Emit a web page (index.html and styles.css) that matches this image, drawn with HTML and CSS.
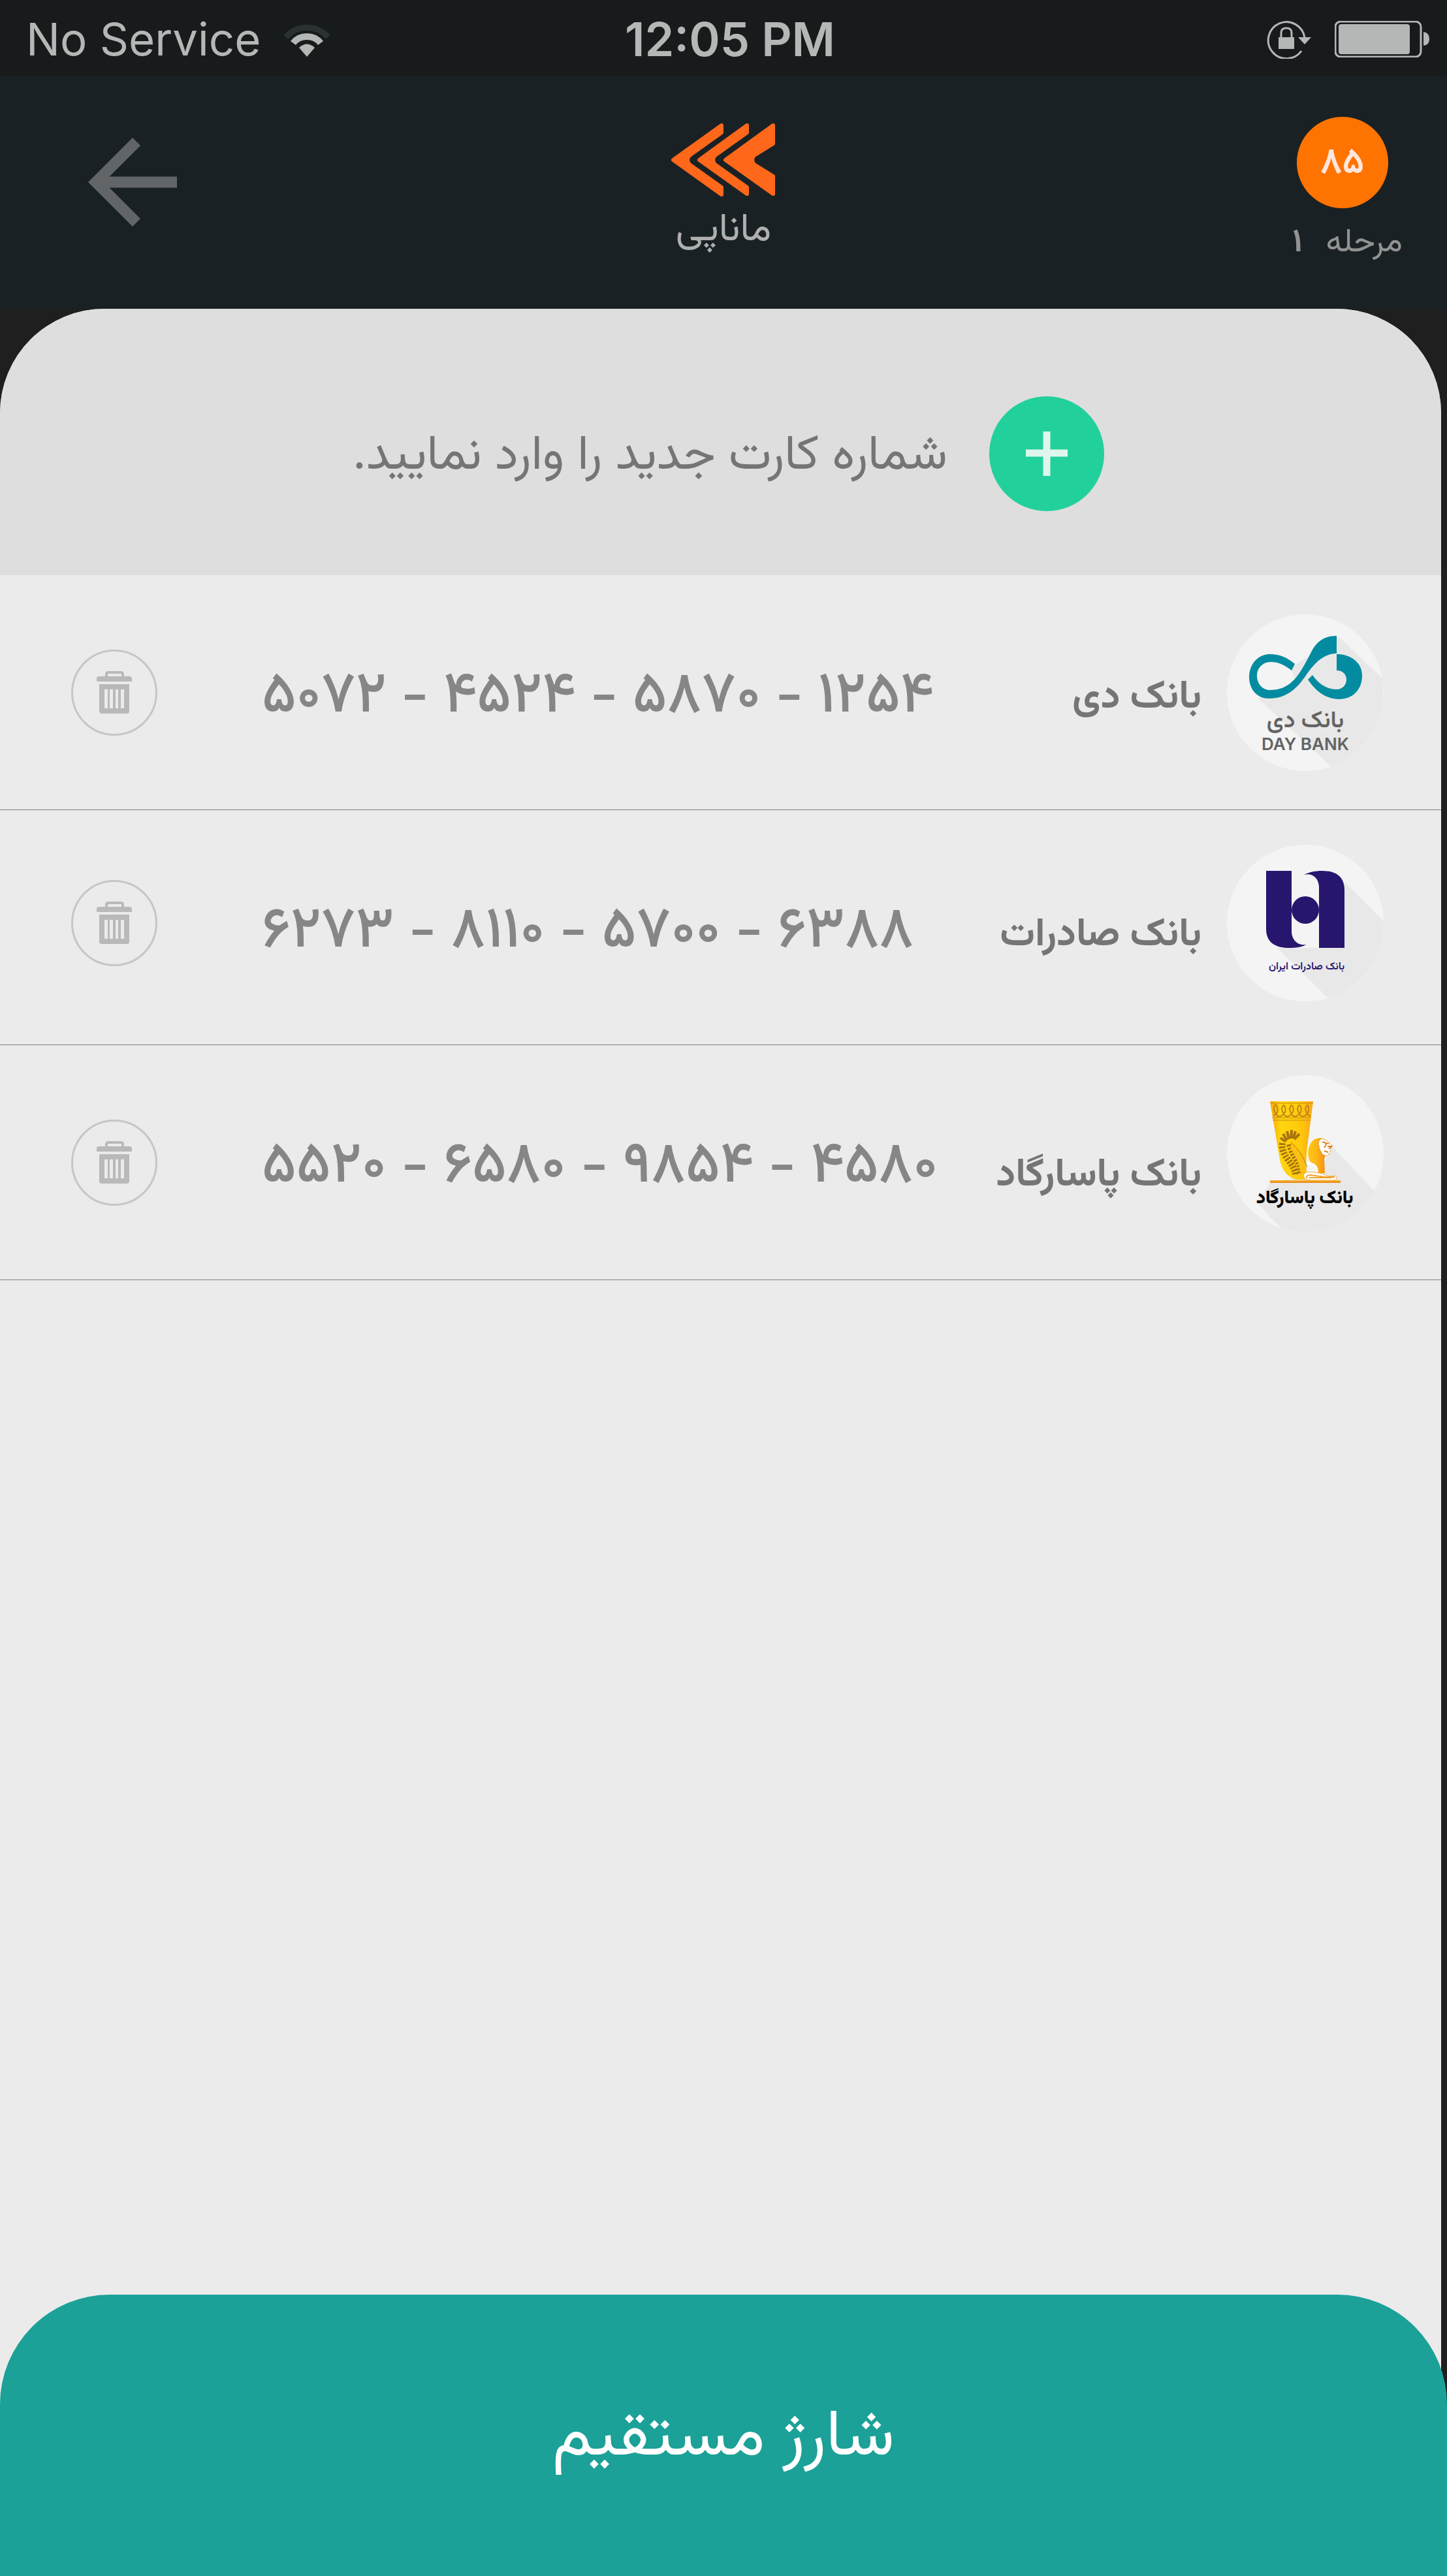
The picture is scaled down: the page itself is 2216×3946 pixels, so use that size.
FILE: index.html
```html
<!DOCTYPE html>
<html lang="fa" dir="rtl">
<head>
<meta charset="utf-8">
<meta name="viewport" content="width=device-width, initial-scale=1">
<title>ماناپی</title>
<link rel="stylesheet" href="styles.css">
</head>
<body>
<div class="status-bar" dir="ltr">
  <div class="status-left">
    <span class="carrier">No Service</span>
    <svg class="wifi" viewBox="0 0 70 54" aria-hidden="true">
      <path d="M3 24A38 32 0 0 1 67 24" fill="none" stroke="#2b3033" stroke-width="9"/>
      <path d="M14 33A25 22 0 0 1 56 33" fill="none" stroke="#b3b7b6" stroke-width="10"/>
      <path d="M35 54L23 40Q35 29 47 40Z" fill="#b3b7b6"/>
    </svg>
  </div>
  <time class="clock">12:05 PM</time>
  <div class="status-right">
    <svg class="lock" viewBox="0 0 68 60" aria-hidden="true">
      <path d="M53 48A28 28 0 1 1 58 28" fill="none" stroke="#b3b7b6" stroke-width="3"/>
      <path d="M48 27H68L58 38Z" fill="#b3b7b6"/>
      <path d="M22 28V20Q22 13 30 13T38 20V28" fill="none" stroke="#b3b7b6" stroke-width="3"/>
      <path d="M18 27H42V45H18Z" fill="#b3b7b6"/>
    </svg>
    <svg class="battery" viewBox="0 0 146 56" aria-hidden="true">
      <rect x="1" y="1" width="131" height="54" rx="8" fill="none" stroke="#b3b7b6" stroke-width="3"/>
      <rect x="6" y="5" width="109" height="46" rx="4" fill="#b3b7b6"/>
      <path d="M136 17Q145 18 145 27.500T136 38Z" fill="#b3b7b6"/>
    </svg>
  </div>
</div>

<header class="header" dir="ltr">
  <a class="back" href="#" aria-label="بازگشت">
    <svg viewBox="4 4 16 16" aria-hidden="true"><path d="M20 11H7.830l5.590-5.590L12 4l-8 8 8 8 1.410-1.410L7.830 13H20z" fill="#616568"/></svg>
  </a>
  <div class="brand">
    <svg class="brand-mark" viewBox="0 0 160 112" aria-hidden="true">
      <g fill="#ff671b" stroke="#ff671b" stroke-width="6" stroke-linejoin="round">
        <path d="M3 56L77 3V14L28 49Q22 56 28 63L77 98V109Z"/>
        <path d="M43 56L116 3V14L67 49Q61 56 67 63L116 98V108Z"/>
        <path d="M83 56L156 3V31L127 49Q121 56 127 63L156 81V108Z"/>
      </g>
    </svg>
    <span class="brand-name">ماناپی</span>
  </div>
  <div class="stage" dir="rtl">
    <span class="stage-score">۸۵</span>
    <span class="stage-label"><span>مرحله</span><b>۱</b></span>
  </div>
</header>

<main class="sheet">
  <section class="add">
    <button class="add-button" type="button">
      <span class="add-icon"><svg viewBox="0 0 64 68" aria-hidden="true"><path d="M32 0V68M0 33H64" stroke="#def6ec" stroke-width="11"/></svg></span>
      <span class="add-label">شماره کارت جدید را وارد نمایید.</span>
    </button>
  </section>

  <ul class="cards">
    <li class="card">
      <svg class="bank-logo" viewBox="0 0 240 240" role="img" aria-label="بانک دی">
        <clipPath id="disc"><circle cx="120" cy="120" r="120"/></clipPath>
        <circle cx="120" cy="120" r="120" fill="#f4f4f4"/>
        <path clip-path="url(#disc)" d="M172 35L239 99L240 240H165L160 234L48 129L100 80Z" fill="#e8e8e8"/>
        <path d="M168 60C150 60 136 72 122 92L117 99L124 100L131 93C140 106 152 115 168 115C177 115 183 108 183 100C183 92 177 86 168 86Z" fill="#e8e8e8"/>
        <path d="M67 73C80 73 90 79 99 86L104 99C92 112 80 116 66 116C54 116 46 106 46 94C46 82 55 73 67 73Z" fill="#f4f4f4"/>
        <g fill="#038ca1">
          <path d="M104 76C92 66 80 61 66 61C48 61 34 76 34 96C34 116 47 129 64 129C92 129 108 113 122 92C136 72 150 60 168 60V33C148 33 138 42 130 56C120 76 112 90 104 99C92 112 80 116 66 116C54 116 46 106 46 94C46 82 55 73 67 73C80 73 90 79 99 86Z"/>
          <path d="M168 61C190 61 207 74 207 94C207 116 192 130 172 130C152 130 136 118 124 100L131 93C140 106 152 115 168 115C177 115 183 108 183 100C183 92 177 86 168 86Z"/>
        </g>
        <text class="day-fa" x="120" y="173">بانک دی</text>
        <text class="day-en" x="120" y="208">DAY BANK</text>
      </svg>
      <span class="bank-name">بانک دی</span>
      <span class="number" dir="ltr">۵۰۷۲ - ۴۵۲۴ - ۵۸۷۰ - ۱۲۵۴</span>
      <button class="delete" type="button" aria-label="حذف کارت بانک دی"><svg viewBox="0 0 54 66" aria-hidden="true"><use href="#trash"/></svg></button>
    </li>
    <li class="card card-raised">
      <svg class="bank-logo" viewBox="0 0 240 240" role="img" aria-label="بانک صادرات ایران">
        <circle cx="120" cy="120" r="120" fill="#f4f4f4"/>
        <path clip-path="url(#disc)" d="M181 58L240 117V240H160L156 236L77 158H141V120Z" fill="#e8e8e8"/>
        <g fill="#28156e">
          <path d="M60 40H99V134C100 148 110 155 122 153C114 157 106 158 95 158C72 158 60 148 60 129Z"/>
          <path d="M180 158H141V64C140 50 130 43 118 46C126 42 134 40 146 40C168 40 180 50 180 69Z"/>
          <circle cx="120" cy="100" r="21"/>
        </g>
        <text class="saderat-fa" x="122" y="191">بانک صادرات ایران</text>
      </svg>
      <span class="bank-name">بانک صادرات</span>
      <span class="number" dir="ltr">۶۲۷۳ - ۸۱۱۰ - ۵۷۰۰ - ۶۳۸۸</span>
      <button class="delete" type="button" aria-label="حذف کارت بانک صادرات"><svg viewBox="0 0 54 66" aria-hidden="true"><use href="#trash"/></svg></button>
    </li>
    <li class="card card-tall">
      <svg class="bank-logo" viewBox="0 0 240 240" role="img" aria-label="بانک پاسارگاد">
        <linearGradient id="gold" x1="0" x2="1"><stop offset="0" stop-color="#f7a400"/><stop offset=".25" stop-color="#ffd60f"/><stop offset=".7" stop-color="#ffc90b"/><stop offset="1" stop-color="#fba81a"/></linearGradient>
        <linearGradient id="mane" x1="0" x2="1"><stop offset="0" stop-color="#ffc814"/><stop offset=".5" stop-color="#fdb515"/><stop offset="1" stop-color="#f28a1c"/></linearGradient>
        <circle cx="120" cy="120" r="120" fill="#f4f4f4"/>
        <path clip-path="url(#disc)" d="M162 110L226 178V240H88L46 196L66 165L140 150Z" fill="#e8e8e8"/>
        <path d="M66 40H132L122 118L121 140L124 160H106Q84 154 80 124Z" fill="url(#gold)"/>
        <path d="M67 43H132M69 65H128M70 69H128" stroke="#c98a10" stroke-width="1"/>
        <path d="M71 62Q80 58 77 49T72 52Q76 67 84 62Q92 56 89 49T84 52Q88 67 96 62Q104 56 101 49T96 52Q100 67 108 62Q116 56 113 49T108 52Q112 67 120 62Q127 56 125 49T120 52Q123 62 128 63" fill="none" stroke="#bf8417" stroke-width="2"/>
        <g fill="none" stroke="#a8730f">
          <path d="M85 104Q83 116 94 130T105 153" stroke-width="10" stroke-dasharray="3 2"/>
          <path d="M95 106Q98 118 106 130T112 152" stroke-width="8" stroke-dasharray="3 2"/>
          <path d="M90 102L82 96M92 100L86 90M95 98L92 86M98 97L99 84M101 97L105 86M103 98L111 90" stroke-width="4"/>
        </g>
        <path d="M98 104Q112 114 122 142L116 152L112 148Q112 134 98 113Z" fill="#fcc016"/>
        <path d="M98 103Q114 116 123 141" fill="none" stroke="#b9790d" stroke-width="1"/>
        <path d="M139 150C141 140 136 136 128 133C122 124 123 108 132 100C138 95 148 95 152 101V120L149 128L150 150Z" fill="url(#mane)"/>
        <path d="M122 135Q138 136 138 149" fill="none" stroke="#fff" stroke-width="3"/>
        <path d="M142 99Q146 95 154 101L161 108L157 120L152 124L146 121L142 113L140 104Z" fill="#fff" stroke="#e6952c" stroke-width="1" stroke-dasharray="4 1"/>
        <path d="M146 103Q150 101 152 106L149 111M154 109L160 109L156 113M149 116L155 118M152 104L156 105" fill="none" stroke="#dc8522" stroke-width="2"/>
        <path d="M136 149Q117 146 117 154Q118 161 130 161H166Q171 158 166 154L157 155Q146 150 136 149Z" fill="#fff" stroke="#f2ad3a" stroke-width="1"/>
        <path d="M123 158Q120 153 128 153L150 156H165M126 157H160" fill="none" stroke="#eea32c" stroke-width="2"/>
        <path d="M66 163H174" stroke="#eb8d1b" stroke-width="4"/>
        <path d="M66 162H174" stroke="#ffc72a" stroke-width="1"/>
        <text class="pasargad-fa" x="119" y="196">بانک پاسارگاد</text>
      </svg>
      <span class="bank-name">بانک پاسارگاد</span>
      <span class="number" dir="ltr">۵۵۲۰ - ۶۵۸۰ - ۹۸۵۴ - ۴۵۸۰</span>
      <button class="delete" type="button" aria-label="حذف کارت بانک پاسارگاد"><svg viewBox="0 0 54 66" aria-hidden="true">
        <g id="trash" fill="#b9b9b9">
          <path d="M15 10V5Q15 2 18 2H37Q40 2 40 5V10" fill="none" stroke="#b9b9b9" stroke-width="4"/>
          <path d="M0 16V11Q0 8 4 8H50Q54 8 54 11V16Z"/>
          <path fill-rule="evenodd" d="M4 20H50V62Q50 65 46 65H8Q4 65 4 62ZM12 28V57H17V28ZM20 28V57H25V28ZM29 28V57H33V28ZM37 28V57H42V28Z"/>
        </g>
      </svg></button>
    </li>
  </ul>
</main>

<footer class="footer">
  <button class="charge" type="button">شارژ مستقیم</button>
</footer>
</body>
</html>
```
FILE: styles.css
```css
* {
  box-sizing: border-box;
}

body {
  margin: 0;
  min-height: 100vh;
  display: flex;
  flex-direction: column;
  background: #1f1f1f;
  color: #757575;
  font-family: Vazirmatn, "Noto Sans Arabic", "DejaVu Sans", sans-serif;
}

button {
  border: 0;
  padding: 0;
  background: none;
  color: inherit;
  font: inherit;
  cursor: pointer;
}

svg {
  display: block;
}

/* Status bar */
.status-bar {
  display: grid;
  grid-template-columns: 1fr auto 1fr;
  align-items: center;
  height: 116px;
  padding: 4px 26px 0 40px;
  background: #181b1c;
  color: #b3b7b6;
  font-family: Inter, "Liberation Sans", sans-serif;
  line-height: 80px;
}

.status-left,
.status-right {
  display: flex;
  align-items: center;
  gap: 36px;
}

.status-right {
  justify-content: flex-end;
}

.carrier {
  font-size: 69px;
}

.clock {
  padding-left: 6px;
  font-size: 72px;
  font-weight: 600;
}

.wifi {
  width: 70px;
  height: 54px;
}

.lock {
  width: 68px;
  height: 60px;
}

.battery {
  width: 146px;
  height: 56px;
}

/* Header */
.header {
  display: grid;
  grid-template-columns: 1fr auto 1fr;
  height: 357px;
  background: #1a2124;
}

.back {
  justify-self: start;
  align-self: start;
  padding: 95px 0 0 135px;
}

.back svg {
  width: 136px;
  height: 136px;
}

.brand {
  display: flex;
  flex-direction: column;
  align-items: center;
  gap: 6px;
  padding-top: 73px;
}

.brand-mark {
  width: 160px;
  height: 112px;
}

.brand-name {
  color: #afafaf;
  font-size: 60px;
  line-height: 92px;
}

.stage {
  justify-self: end;
  display: flex;
  flex-direction: column;
  align-items: center;
  gap: 14px;
  padding: 63px 68px 0 0;
}

.stage-score {
  display: flex;
  align-items: center;
  justify-content: center;
  width: 140px;
  height: 140px;
  padding-top: 4px;
  border-radius: 50%;
  background: #ff7300;
  color: #ffe6dc;
  font-size: 56px;
  font-weight: 600;
}

.stage-label {
  display: flex;
  gap: 36px;
  padding-left: 16px;
  color: #929292;
  font-size: 50px;
  line-height: 80px;
}

/* Card sheet */
.sheet {
  flex: 1;
  margin-right: 9px;
  padding-bottom: 180px;
  border-radius: 160px 160px 0 0;
  background: #ebebeb;
  overflow: hidden;
}

.add {
  display: flex;
  align-items: center;
  justify-content: center;
  height: 408px;
  padding: 36px 0 0 24px;
  background: #dedede;
}

.add-button {
  display: flex;
  align-items: center;
  gap: 64px;
  font-size: 75px;
}

.add-label {
  padding-top: 8px;
}

.add-icon {
  display: grid;
  place-items: center;
  width: 176px;
  height: 176px;
  border-radius: 50%;
  background: #22d09b;
}

.add-icon svg {
  width: 64px;
  height: 68px;
}

.cards {
  margin: 0;
  padding: 0;
  list-style: none;
}

.card {
  display: grid;
  grid-template-columns: 240px 1fr auto 132px;
  align-items: center;
  height: 360px;
  padding: 0 88px 0 109px;
  border-bottom: 1px solid #808080;
}

.bank-logo {
  width: 240px;
  height: 240px;
}

.bank-name {
  padding: 16px 39px 0 0;
  font-size: 60px;
  font-weight: 700;
}

.number {
  padding: 16px 0 0 160px;
  color: #868686;
  font-size: 88px;
  font-weight: 500;
}

.delete {
  display: grid;
  place-items: center;
  width: 132px;
  height: 132px;
  border: 3px solid #c6c6c6;
  border-radius: 50%;
}

.delete svg {
  width: 54px;
  height: 66px;
}

.card-raised .bank-logo,
.card-raised .delete {
  margin-bottom: 14px;
}

.card-raised .bank-name {
  padding-top: 24px;
}

.card-tall .bank-logo {
  margin-bottom: 28px;
}

.card-tall .bank-name {
  padding-top: 40px;
}

/* Lettering inside the bank marks */
.bank-logo text {
  text-anchor: middle;
}

.day-fa {
  fill: #636363;
  font-size: 36px;
  font-weight: 600;
}

.day-en {
  fill: #636363;
  font-family: Inter, sans-serif;
  font-size: 26px;
  font-weight: 600;
}

.saderat-fa {
  fill: #28156e;
  font-size: 16px;
  font-weight: 600;
}

.pasargad-fa {
  fill: #000;
  font-size: 28px;
  font-weight: 900;
}

/* Footer action */
.footer {
  margin-top: -180px;
}

.charge {
  display: block;
  width: 100%;
  height: 431px;
  padding-top: 10px;
  border-radius: 168px 168px 0 0;
  background: #1ba197;
  color: #fff;
  font-size: 100px;
}
```
